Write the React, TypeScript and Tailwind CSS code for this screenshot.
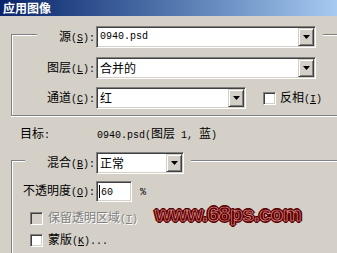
import React from 'react'

const mono = "font-['Liberation_Mono',monospace] text-[10px]"
const sunken =
  'border border-t-[#808080] border-l-[#808080] border-r-white border-b-white shadow-[inset_1px_1px_0_#404040,inset_-1px_-1px_0_#d4d0c8]'
const raised =
  'border border-t-[#d4d0c8] border-l-[#d4d0c8] border-r-[#404040] border-b-[#404040] shadow-[inset_1px_1px_0_#fff,inset_-1px_-1px_0_#808080] bg-[#d4d0c8]'

// ascii runs get the narrow mono font, "&X" underlines X
function Txt({ s }: { s: string }) {
  const out: { t: string; a: boolean; u: boolean }[] = []
  for (let i = 0; i < s.length; i++) {
    let c = s[i]
    let u = false
    if (c === '&' && i + 1 < s.length) {
      c = s[++i]
      u = true
    }
    const a = c.charCodeAt(0) < 128
    const last = out[out.length - 1]
    if (last && last.a === a && !last.u && !u) last.t += c
    else out.push({ t: c, a, u })
  }
  return (
    <>
      {out.map((p, i) => (
        <span key={i} className={`whitespace-pre ${p.a ? mono : ''} ${p.u ? 'underline' : ''}`}>
          {p.t}
        </span>
      ))}
    </>
  )
}

const Combo = ({ value, className }: { value: string; className: string }) => (
  <div className={`${sunken} ${className} bg-white h-[22px] p-px flex items-stretch`}>
    <div className="flex-1 pl-[2px] flex items-center whitespace-nowrap">
      <Txt s={value} />
    </div>
    <div className={`${raised} w-[16px] flex items-center justify-center`}>
      <svg width="7" height="4" viewBox="0 0 7 4">
        <path d="M0 0h7L3.5 4z" fill="#000" />
      </svg>
    </div>
  </div>
)

const Check = ({ disabled }: { disabled?: boolean }) => (
  <div className={`${sunken} w-[13px] h-[13px] shrink-0 ${disabled ? 'bg-[#d4d0c8]' : 'bg-white'}`} />
)

export default function App() {
  return (
    <div className="w-[337px] h-[253px] overflow-hidden bg-[#d4d0c8] relative font-['Noto_Sans_CJK_SC',sans-serif] text-[12px] leading-[16px] text-black">
      {/*title*/}
      <div className="h-[16px] flex items-center pl-[3px] text-white font-bold bg-linear-to-r from-[#0a246a] to-[#a6caf0]">
        应用图像
      </div>

      {/*source group*/}
      <div className="ml-[11px] mt-[18px] w-[340px] border border-[#808080] shadow-[inset_1px_1px_0_#fff,0_1px_0_#fff] pb-[6px]">
        <div className="mt-[-9px] ml-[25px] w-[286px] bg-[#d4d0c8] flex items-center">
          <div className="w-[59px] pr-[1px] text-right whitespace-nowrap">
            <Txt s="源(&S):" />
          </div>
          <Combo value="0940.psd" className="w-[220px]" />
        </div>

        <div className="mt-[9px] flex items-center">
          <div className="w-[84px] pr-[1px] text-right whitespace-nowrap">
            <Txt s="图层(&L):" />
          </div>
          <Combo value="合并的" className="w-[220px]" />
        </div>

        <div className="mt-[8px] flex items-center">
          <div className="w-[84px] pr-[1px] text-right whitespace-nowrap">
            <Txt s="通道(&C):" />
          </div>
          <Combo value="红" className="w-[150px]" />
          <div className="ml-[17px]">
            <Check />
          </div>
          <div className="ml-[4px] whitespace-nowrap">
            <Txt s="反相(&I)" />
          </div>
        </div>
      </div>

      {/*target*/}
      <div className="mt-[10px] h-[16px] flex items-center pl-[20px] whitespace-nowrap">
        <div className="w-[77px]">
          <Txt s="目标:" />
        </div>
        <div>
          <Txt s="0940.psd(图层 1, 蓝)" />
        </div>
      </div>

      {/*blending group*/}
      <div className="ml-[11px] mt-[18px] w-[340px] h-[120px] border border-[#808080] shadow-[inset_1px_1px_0_#fff]">
        <div className="mt-[-9px] ml-[13px] w-[166px] bg-[#d4d0c8] flex items-center">
          <div className="w-[71px] pr-[1px] text-right whitespace-nowrap">
            <Txt s="混合(&B):" />
          </div>
          <Combo value="正常" className="w-[88px]" />
        </div>

        <div className="mt-[7px] flex items-center">
          <div className="w-[84px] pr-[1px] text-right whitespace-nowrap">
            <Txt s="不透明度(&O):" />
          </div>
          <div className={`${sunken} bg-white w-[36px] h-[21px] flex items-center pl-[2px]`}>
            <span className="w-px h-[13px] bg-black" />
            <span className="ml-px">
              <Txt s="60" />
            </span>
          </div>
          <div className="ml-[8px]">
            <Txt s="%" />
          </div>
        </div>

        <div className="mt-[8px] h-[16px] flex items-center pl-[18px]">
          <Check disabled />
          <div className="ml-[5px] whitespace-nowrap text-[#808080] [text-shadow:1px_1px_0_#fff]">
            <Txt s="保留透明区域(&T)" />
          </div>
        </div>

        <div className="mt-[6px] h-[16px] flex items-center pl-[18px]">
          <Check />
          <div className="ml-[5px] whitespace-nowrap">
            <Txt s="蒙版(&K)..." />
          </div>
        </div>
      </div>

      {/*watermark*/}
      <div className="absolute left-[155px] top-[202px] font-['Liberation_Sans',sans-serif] font-bold text-[21px] leading-[24px] tracking-[-0.4px] text-[#640000] [-webkit-text-stroke:0.6px_#e6a6a6] [text-shadow:2px_0_0_#5a0000,-2px_0_0_#5a0000,0_2px_0_#5a0000,0_-2px_0_#5a0000,1px_1px_0_#5a0000,-1px_-1px_0_#5a0000,1px_-1px_0_#5a0000,-1px_1px_0_#5a0000]">
        www.68ps.com
      </div>
    </div>
  )
}
